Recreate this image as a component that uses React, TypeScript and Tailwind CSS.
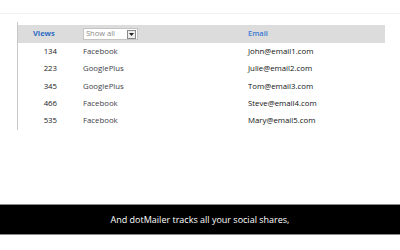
import React from "react";

const rows = [
  { v: "134", s: "Facebook", e: "John@email1.com" },
  { v: "223", s: "GooglePlus", e: "Julie@email2.com" },
  { v: "345", s: "GooglePlus", e: "Tom@email3.com" },
  { v: "466", s: "Facebook", e: "Steve@email4.com" },
  { v: "535", s: "Facebook", e: "Mary@email5.com" },
];

export default function App() {
  return (
    <div className="w-[400px] h-[250px] bg-white flex flex-col overflow-hidden" style={{ fontFamily: '"Open Sans", "Liberation Sans", sans-serif' }}>
      <div className="h-[14px] border-b border-[#f2f2f2]" />
      <div className="h-[190px] flex flex-col">
        <div className="ml-[17px] mt-[8px] w-[368px] border-l border-[#c8c8c8] pt-[3px]">
          <div className="h-[18px] bg-[#dcdcdc] flex items-center text-[7.5px]">
            <div className="w-[65px] pl-[15px] font-bold text-[#2f6dc4]">Views</div>
            <div className="w-[55px] h-[12px] bg-white border border-[#c4c4c4] flex items-center justify-between pl-[2px] pr-[1px]">
              <span className="text-[#8a8a8a]">Show all</span>
              <span className="w-[9px] h-[9px] border border-[#888] bg-[#eeeeee] flex items-center justify-center">
                <svg width="5" height="3" viewBox="0 0 5 3"><path d="M0 0h5L2.5 3z" fill="#222" /></svg>
              </span>
            </div>
            <div className="ml-[110px] font-semibold text-[#3a78d0]">Email</div>
          </div>
          {rows.map((r) => (
            <div key={r.v} className="h-[17.4px] flex items-center text-[7.8px]">
              <div className="w-[39px] text-right text-[#222]">{r.v}</div>
              <div className="ml-[26px] w-[165px] text-[#3c3c4a]">{r.s}</div>
              <div className="text-[#111]">{r.e}</div>
            </div>
          ))}
        </div>
      </div>
      <div className="h-[31px] bg-black border-y border-[#8a8a8a] flex items-center justify-center">
        <span className="text-white text-[9px]" style={{ fontFamily: '"Open Sans", sans-serif' }}>And dotMailer tracks all your social shares,</span>
      </div>
      <div className="flex-1 bg-white" />
    </div>
  );
}
